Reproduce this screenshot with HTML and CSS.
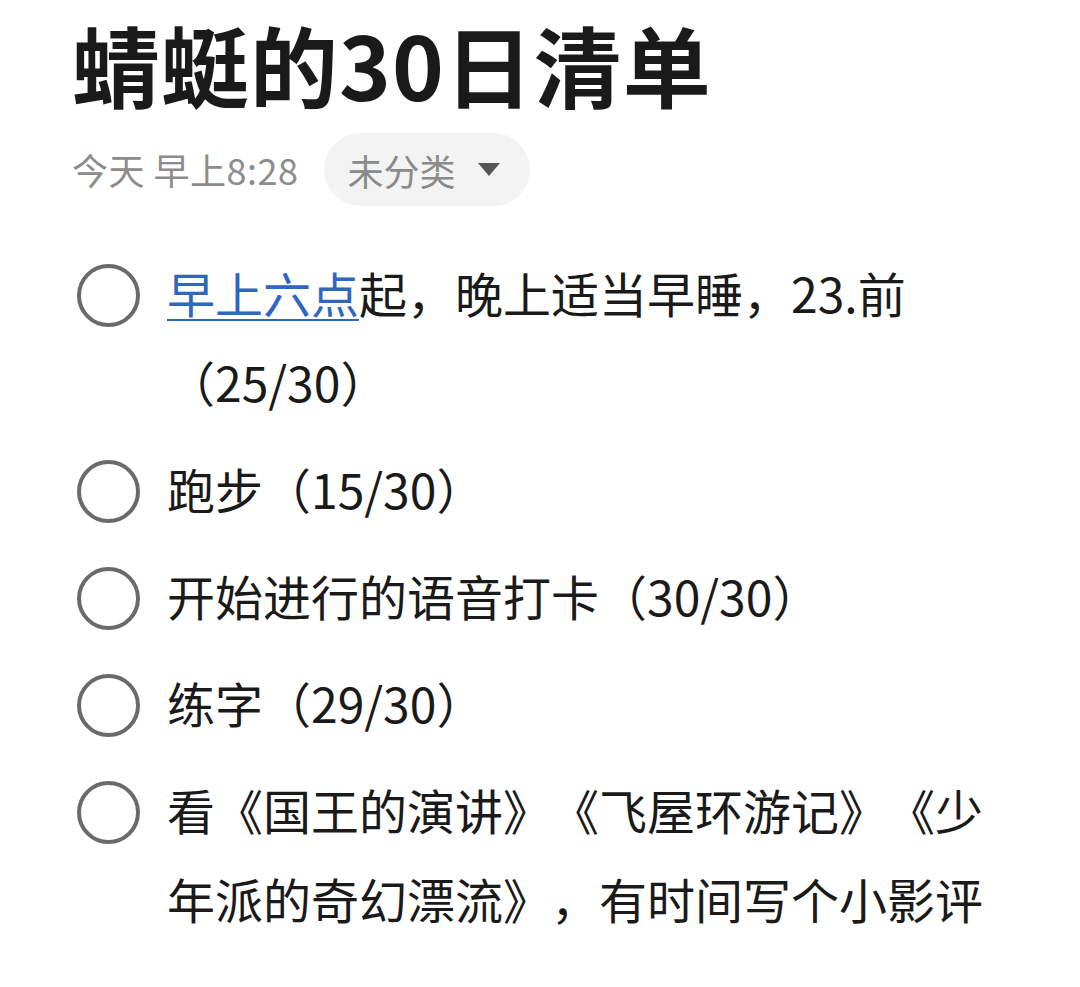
FILE: index.html
```html
<!DOCTYPE html>
<html lang="zh-CN">
<head>
<meta charset="utf-8">
<title>蜻蜓的30日清单</title>
<link rel="stylesheet" href="styles.css">
</head>
<body>
<main class="page">
  <h1 class="title">蜻蜓的30日清单</h1>
  <div class="meta">
    <span class="time">今天 早上8:28</span>
    <span class="pill">未分类<span class="caret"></span></span>
  </div>
  <ul class="list">
    <li class="item"><span class="check"></span><p class="text"><a class="link" href="#">早上六点</a>起，晚上适当早睡，23.前（25/30）</p></li>
    <li class="item"><span class="check"></span><p class="text">跑步（15/30）</p></li>
    <li class="item"><span class="check"></span><p class="text">开始进行的语音打卡（30/30）</p></li>
    <li class="item"><span class="check"></span><p class="text">练字（29/30）</p></li>
    <li class="item"><span class="check"></span><p class="text">看《国王的演讲》《飞屋环游记》《少年派的奇幻漂流》，有时间写个小影评</p></li>
  </ul>
</main>
</body>
</html>
```

FILE: styles.css
```css
html, body {
  margin: 0;
  padding: 0;
  background: #ffffff;
}
body {
  font-family: "Noto Sans CJK SC", "Noto Sans", sans-serif;
  color: #1a1a1a;
  text-spacing-trim: space-all;
}
.page {
  padding: 13px 0 0 72px;
  width: 934px;
}
.title {
  margin: 0;
  font-size: 88px;
  line-height: 100px;
  font-weight: 700;
  letter-spacing: 1px;
  color: #1a1a1a;
}
.meta {
  margin-top: 20px;
  display: flex;
  align-items: center;
  height: 73px;
}
.time {
  font-size: 36px;
  color: #8c8c8c;
  line-height: 73px;
  letter-spacing: 0.5px;
}
.pill {
  margin-left: 25px;
  height: 73px;
  border-radius: 37px;
  background: #f3f3f3;
  display: flex;
  align-items: center;
  padding: 0 30px 0 24px;
  font-size: 36px;
  color: #8a8a8a;
}
.caret {
  margin-left: 22px;
  width: 0;
  height: 0;
  border-left: 11px solid transparent;
  border-right: 11px solid transparent;
  border-top: 13px solid #555555;
}
.list {
  list-style: none;
  margin: 42px 0 0 0;
  padding: 0;
  display: flex;
  flex-direction: column;
  gap: 18px;
}
.item {
  display: flex;
  align-items: flex-start;
}
.check {
  flex: none;
  box-sizing: border-box;
  width: 63px;
  height: 63px;
  margin: 16px 0 0 5px;
  border: 4px solid #6a6a6a;
  border-radius: 50%;
}
.text {
  margin: 0 0 0 27px;
  width: 834px;
  font-size: 48px;
  line-height: 89px;
  color: #1a1a1a;
}
.link {
  color: #2f66c2;
  text-decoration: underline;
  text-decoration-thickness: 2px;
  text-underline-offset: 6px;
}
```
